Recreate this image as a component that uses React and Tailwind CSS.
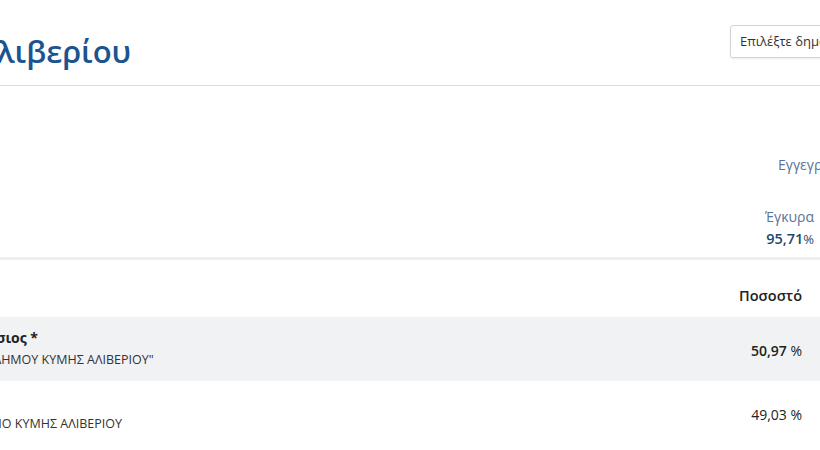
import React from "react";

const rows = [
  {
    name: "Μπουραντάς Αθανάσιος *",
    party: "ΕΝΩΣΗ \"ΑΝΑΓΕΝΝΗΣΗ ΔΗΜΟΥ ΚΥΜΗΣ ΑΛΙΒΕΡΙΟΥ\"",
    pct: "50,97",
    lead: true,
  },
  {
    name: "Λιάπης Γεώργιος",
    party: "ΟΛΟΙ ΜΑΖΙ ΓΙΑ ΤΟΝ ΔΗΜΟ ΚΥΜΗΣ ΑΛΙΒΕΡΙΟΥ",
    pct: "49,03",
    lead: false,
  },
];

export default function App() {
  return (
    <div className="w-[820px] h-[450px] overflow-hidden bg-white font-['Open_Sans',sans-serif] text-[#222]">
      {/* HEADER */}
      <div className="h-[86px] border-b border-[#dedede] flex items-start">
        <div className="w-[131px] overflow-hidden flex justify-end mt-[31px]">
          <h1 className="whitespace-nowrap text-[31px] leading-[40px] font-semibold text-[#1b5490]">
            Δήμος Κύμης-Αλιβερίου
          </h1>
        </div>
        <div className="ml-auto mt-[25px] -mr-[40px] h-[33px] w-[130px] border border-[#d4d4d4] rounded-[3px] shadow-[0_1px_2px_rgba(0,0,0,0.08)] flex items-center pl-[9px] text-[13px] text-[#333] whitespace-nowrap overflow-hidden">
          Επιλέξτε δημο
        </div>
      </div>

      {/* STATS */}
      <div className="h-[174px] border-b-[3px] border-[#eeeeee] text-[14px] text-[#5a7299]">
        <div className="pl-[778px] pt-[69px] leading-[20px] whitespace-nowrap">Εγγεγραμμένοι</div>
        <div className="w-[814px] text-right mt-[31px] leading-[22px]">
          <div>Έγκυρα</div>
          <div className="text-[#22486f]">
            <span className="font-semibold text-[14.5px]">95,71</span>
            <span className="text-[13px]">%</span>
          </div>
        </div>
      </div>

      {/* TABLE */}
      <div>
        <div className="h-[57px] flex items-center justify-end text-[14.5px] font-semibold pt-[15px] pr-[18px]">
          Ποσοστό
        </div>
        {rows.map((r) => (
          <div
            key={r.pct}
            className={`h-[64px] flex items-center pr-[18px] ${r.lead ? "bg-[#f0f2f4]" : ""}`}
          >
            <div className="-ml-[143px] flex flex-col whitespace-nowrap">
              <span className="text-[14px] font-bold leading-[22px]">{r.name}</span>
              <span className="text-[12.5px] leading-[22px] text-[#333]">{r.party}</span>
            </div>
            <div className="ml-auto text-[14px] pt-[2px]">
              <span className={r.lead ? "font-semibold" : ""}>{r.pct}</span>
              <span> %</span>
            </div>
          </div>
        ))}
      </div>
    </div>
  );
}
